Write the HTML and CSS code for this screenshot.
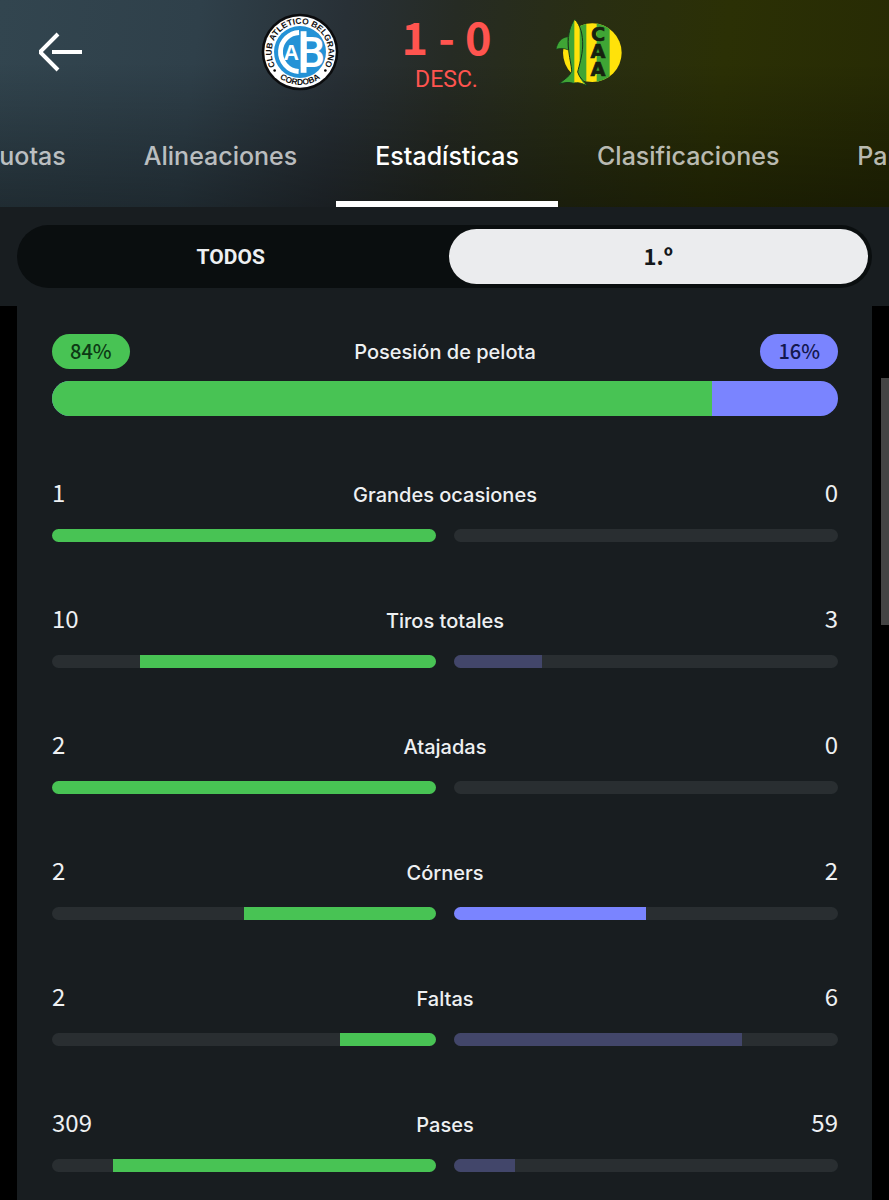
FILE: index.html
```html
<!DOCTYPE html>
<html lang="es">

<head>
<meta charset="utf-8">
<meta name="viewport" content="width=device-width, initial-scale=1">
<title>Belgrano - Aldosivi</title>
<link rel="stylesheet" href="styles.css">
</head>

<body>

<header class="header">
	<div class="match">
		<div class="side home">
			<button class="back" type="button" aria-label="Volver">
				<svg width="46" height="40" viewBox="0 0 46 40" fill="none" stroke="#fff" stroke-width="4"><path d="M21 2 4 19v2l17 17M15 20h30"/></svg>
			</button>
			<svg class="crest" width="78" height="78" viewBox="0 0 240 240">
				<defs>
					<path id="arcTop" d="M50 172A87 87 0 1 1 190 172"/>
					<path id="arcBottom" d="M22 150A103 103 0 0 0 218 150"/>
				</defs>
				<circle cx="120" cy="120" r="118" fill="#0b0c0e"/>
				<circle cx="120" cy="120" r="110" fill="#fff"/>
				<circle cx="120" cy="120" r="80" fill="#2492d6"/>
				<circle cx="120" cy="120" r="60" fill="none" stroke="#fff" stroke-width="15" stroke-dasharray="180 200" transform="rotate(94 120 120)"/>
				<path fill="#fff" d="M122 56h18v128h-18z"/>
				<text class="crest-a" x="69" y="144">A</text>
				<text class="crest-b" x="114" y="167">B</text>
				<text class="crest-name"><textPath href="#arcTop" startOffset="50%" text-anchor="middle">CLUB ATLETICO BELGRANO</textPath></text>
				<text class="crest-name"><textPath href="#arcBottom" startOffset="50%" text-anchor="middle">CORDOBA</textPath></text>
				<circle cx="42" cy="177" r="4"/>
				<circle cx="198" cy="177" r="4"/>
			</svg>
		</div>
		<div class="score">
			<div class="goals">1 - 0</div>
			<div class="status">DESC.</div>
		</div>
		<div class="side away">
			<svg class="crest" width="70" height="72" viewBox="30 30 210 216">
				<defs>
					<clipPath id="ball"><circle cx="145" cy="140" r="88"/></clipPath>
					<clipPath id="fish"><path id="fishShape" d="M92 40C79 57 71 85 73 120c2 34 10 60 10 76-7 18-24 23-37 38 17-5 30-6 42-2 12-4 25-1 42 8-8-15-25-24-29-42 4-18 14-48 15-78 1-35-7-63-24-80Z"/></clipPath>
				</defs>
				<g clip-path="url(#ball)">
					<path fill="#ffe20a" d="M50 50h190v190H50z"/>
					<path fill="#3fa535" d="M90 50h37v190H90zM158 50h39v190h-39z"/>
				</g>
				<path d="M72 92c-19 2-32 16-36 38 12-4 24-4 37 2Z" fill="#3fa535" stroke="#15331a" stroke-width="2"/>
				<g clip-path="url(#fish)">
					<path fill="#3fa535" d="M30 30h110v215H30z"/>
					<path fill="#ffe20a" d="M91 35h16v180q8 15 20 24-18-9-36-8Z"/>
				</g>
				<use href="#fishShape" fill="none" stroke="#15331a" stroke-width="3"/>
				<text class="crest-caa" x="162" y="104">C</text>
				<text class="crest-caa" x="162" y="156">A</text>
				<text class="crest-caa" x="162" y="210">A</text>
			</svg>
		</div>
	</div>
	<nav class="tabs">
		<a class="tab" href="#">Cuotas</a>
		<a class="tab" href="#">Alineaciones</a>
		<a class="tab active" href="#" aria-current="page">Estadísticas</a>
		<a class="tab" href="#">Clasificaciones</a>
		<a class="tab" href="#">Partidos</a>
	</nav>
</header>

<div class="filter">
	<div class="periods">
		<button class="period" type="button">TODOS</button>
		<button class="period selected" type="button">1.º</button>
	</div>
</div>

<main class="stats">
	<section class="possession">
		<div class="values">
			<span class="pill green">84%</span>
			<span class="label">Posesión de pelota</span>
			<span class="pill purple">16%</span>
		</div>
		<div class="share">
			<div class="green" style="width: 84%"></div>
		</div>
	</section>

	<section class="stat">
		<div class="values"><span class="num">1</span><span class="label">Grandes ocasiones</span><span class="num">0</span></div>
		<div class="bars">
			<div class="bar left"><div class="green" style="width: 100%"></div></div>
			<div class="bar"></div>
		</div>
	</section>

	<section class="stat">
		<div class="values"><span class="num">10</span><span class="label">Tiros totales</span><span class="num">3</span></div>
		<div class="bars">
			<div class="bar left"><div class="green" style="width: 77%"></div></div>
			<div class="bar"><div class="dim" style="width: 23%"></div></div>
		</div>
	</section>

	<section class="stat">
		<div class="values"><span class="num">2</span><span class="label">Atajadas</span><span class="num">0</span></div>
		<div class="bars">
			<div class="bar left"><div class="green" style="width: 100%"></div></div>
			<div class="bar"></div>
		</div>
	</section>

	<section class="stat">
		<div class="values"><span class="num">2</span><span class="label">Córners</span><span class="num">2</span></div>
		<div class="bars">
			<div class="bar left"><div class="green" style="width: 50%"></div></div>
			<div class="bar"><div class="purple" style="width: 50%"></div></div>
		</div>
	</section>

	<section class="stat">
		<div class="values"><span class="num">2</span><span class="label">Faltas</span><span class="num">6</span></div>
		<div class="bars">
			<div class="bar left"><div class="green" style="width: 25%"></div></div>
			<div class="bar"><div class="dim" style="width: 75%"></div></div>
		</div>
	</section>

	<section class="stat">
		<div class="values"><span class="num">309</span><span class="label">Pases</span><span class="num">59</span></div>
		<div class="bars">
			<div class="bar left"><div class="green" style="width: 84%"></div></div>
			<div class="bar"><div class="dim" style="width: 16%"></div></div>
		</div>
	</section>
</main>

<div class="thumb"></div>

</body>

</html>
```
FILE: styles.css
```css
body {
	margin: 0;
	background: #000;
	color: #eef0f2;
	font-family: Inter, "Liberation Sans", sans-serif;
	position: relative;
}
button {
	border: 0;
	padding: 0;
	background: none;
	cursor: pointer;
}

/* header */
.header {
	background:
		linear-gradient(180deg, rgba(0, 0, 0, 0) 30%, rgba(0, 0, 0, 0.36) 100%),
		linear-gradient(97deg, #32454f 0%, #2f404a 22%, #283036 38%, #262b24 50%, #292e12 65%, #2b3005 80%, #272b04 100%);
}
.match {
	display: grid;
	grid-template-columns: 1fr auto 1fr;
	column-gap: 62px;
	height: 104px;
	padding-left: 4px;
}
.side {
	display: flex;
	align-items: center;
}
.home {
	justify-content: space-between;
}
.back {
	display: flex;
	padding: 8px;
	margin-left: 25px;
}
.score {
	color: #ff544f;
	text-align: center;
	padding-top: 12px;
}
.goals {
	font-family: "Noto Sans CJK JP", sans-serif;
	font-size: 45px;
	font-weight: 700;
	line-height: 48px;
	margin-bottom: 4px;
}
.status {
	font-family: Roboto, sans-serif;
	font-size: 23px;
	line-height: 32px;
}

/* crests */
.crest-name {
	font-family: "Liberation Sans", Arial, sans-serif;
	font-size: 26px;
	font-weight: 700;
	fill: #111;
}
.crest-a {
	font-family: "Liberation Sans", Arial, sans-serif;
	font-size: 66px;
	font-weight: 700;
	fill: #fff;
}
.crest-b {
	font-family: Roboto, sans-serif;
	font-size: 132px;
	font-weight: 500;
	fill: #fff;
}
.crest-caa {
	font-family: "DejaVu Sans", sans-serif;
	font-size: 58px;
	font-weight: 700;
	text-anchor: middle;
	fill: #16210f;
	stroke: #16210f;
	stroke-width: 2px;
}

/* tabs */
.tabs {
	display: flex;
	overflow: hidden;
	height: 103px;
}
.tab {
	flex: none;
	box-sizing: border-box;
	padding: 0 39px;
	border-bottom: 6px solid transparent;
	font-size: 25px;
	font-weight: 500;
	line-height: 104px;
	color: rgba(255, 255, 255, 0.7);
	text-decoration: none;
}
.tab:first-child {
	margin-left: -58px;
}
.tab.active {
	color: #fff;
	border-bottom-color: #fff;
}

/* period switch */
.filter {
	background: #181d20;
	padding: 18px 17px;
}
.periods {
	display: flex;
	gap: 8px;
	padding: 4px;
	border-radius: 32px;
	background: #0a0e0f;
}
.period {
	flex: 1;
	height: 55px;
	border-radius: 28px;
	font-family: Roboto, sans-serif;
	font-size: 21px;
	font-weight: 700;
	color: #eef0f2;
}
.period.selected {
	background: #ebecee;
	color: #14181b;
	font-family: "Noto Sans CJK JP", sans-serif;
	font-size: 22px;
	padding-bottom: 4px;
}

/* stats */
.stats {
	margin: 0 17px;
	padding: 28px 34px 28px 35px;
	background: #181d20;
}
.values {
	display: grid;
	grid-template-columns: 1fr auto 1fr;
	align-items: center;
}
.values > :last-child {
	justify-self: end;
}
.values > :first-child {
	justify-self: start;
}
.label {
	font-size: 20px;
	font-weight: 500;
	line-height: 32px;
}
.num {
	font-family: "Noto Sans CJK JP", sans-serif;
	font-size: 24px;
	line-height: 28px;
}
.pill {
	padding: 0 18px 2px;
	border-radius: 18px;
	font-family: "Noto Sans CJK JP", sans-serif;
	font-size: 20px;
	font-weight: 500;
	line-height: 33px;
}
.pill.green {
	color: #0d3a14;
}
.pill.purple {
	color: #14184f;
}
.green {
	background: #48c354;
}
.purple {
	background: #7a84ff;
}
.dim {
	background: #42466a;
}
.share {
	display: flex;
	height: 35px;
	margin-top: 12px;
	border-radius: 18px;
	overflow: hidden;
	background: #7a84ff;
}
.stat {
	margin-top: 62px;
}
.stat .values {
	height: 32px;
	align-items: baseline;
}
.bars {
	display: flex;
	gap: 18px;
	margin-top: 19px;
}
.bar {
	flex: 1;
	display: flex;
	height: 13px;
	border-radius: 7px;
	overflow: hidden;
	background: #292e31;
}
.left {
	justify-content: flex-end;
}

/* scroll thumb */
.thumb {
	position: absolute;
	top: 378px;
	right: 0;
	width: 8px;
	height: 247px;
	background: #444;
}
```
